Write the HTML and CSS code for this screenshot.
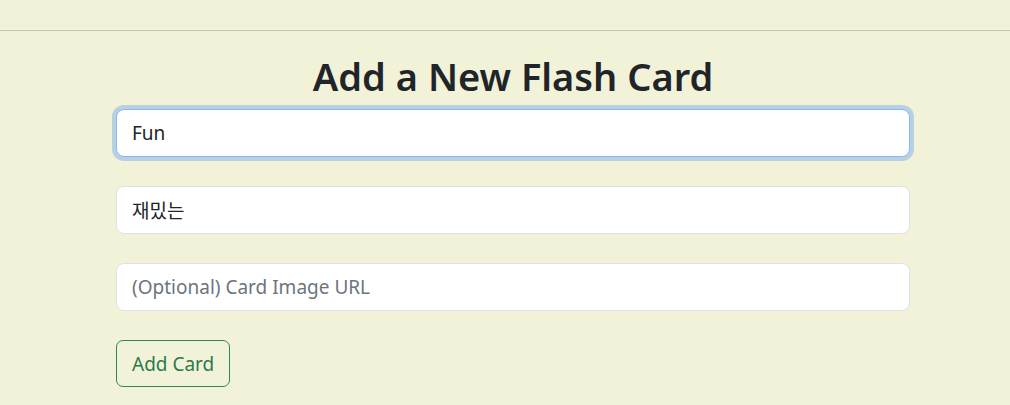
FILE: index.html
```html
<!DOCTYPE html>
<html lang="en">
<head>
<meta charset="utf-8">
<title>Add a New Flash Card</title>
<link rel="stylesheet" href="styles.css">
</head>
<body>
<header class="topbar"></header>
<main class="page">
  <div class="container">
    <h1 class="title">Add a New Flash Card</h1>
    <form class="card-form">
      <input class="form-control is-focused" type="text" value="Fun" autofocus>
      <input class="form-control" type="text" value="재밌는">
      <input class="form-control" type="text" placeholder="(Optional) Card Image URL">
      <div class="actions">
        <button type="button" class="btn-outline">Add Card</button>
      </div>
    </form>
  </div>
</main>
</body>
</html>
```
FILE: styles.css
```css
* { box-sizing: border-box; }
html, body {
  margin: 0;
  background: #f2f2d9;
  color: #212529;
  font-family: "Noto Sans", "Noto Sans CJK KR", sans-serif;
}
.topbar {
  height: 31px;
  border-bottom: 1px solid #c6c6ae;
}
.page {
  padding-left: 16px;
}
.container {
  max-width: 794px;
  margin: 0 auto;
}
.title {
  margin: 21px 0 9px;
  text-align: center;
  font-size: 38px;
  line-height: 48px;
  font-weight: 600;
  color: #212529;
}
.card-form {
  display: flex;
  flex-direction: column;
  gap: 29px;
}
.form-control {
  display: block;
  width: 100%;
  height: 48px;
  padding: 8px 15px;
  font-family: "Noto Sans", "Noto Sans CJK KR", sans-serif;
  font-size: 19px;
  line-height: 30px;
  color: #212529;
  background: #fff;
  border: 1px solid #dee2e6;
  border-radius: 8px;
  outline: none;
}
.form-control::placeholder { color: #6c757d; opacity: 1; }
.form-control.is-focused,
.form-control:focus {
  border-color: #86b7fe;
  box-shadow: 0 0 0 4px rgba(13, 110, 253, 0.25);
}
.actions { display: flex; }
.btn-outline {
  height: 47px;
  padding: 7px 15px;
  font-family: "Noto Sans", sans-serif;
  font-size: 19px;
  line-height: 30px;
  color: #2b7a4c;
  background: transparent;
  border: 1px solid #2a8a4f;
  border-radius: 7px;
  cursor: pointer;
}
```
